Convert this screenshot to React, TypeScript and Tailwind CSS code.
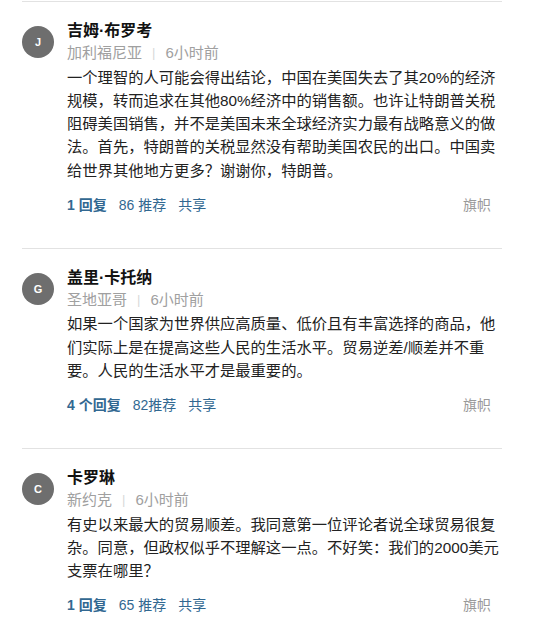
import React from "react";

type Comment = {
  id: string;
  initial: string;
  name: string;
  location: string;
  time: string;
  body: string;
  replies: string;
  recommends: string;
};

const comments: Comment[] = [
  {
    id: "1",
    initial: "J",
    name: "吉姆·布罗考",
    location: "加利福尼亚",
    time: "6小时前",
    body: "一个理智的人可能会得出结论，中国在美国失去了其20%的经济规模，转而追求在其他80%经济中的销售额。也许让特朗普关税阻碍美国销售，并不是美国未来全球经济实力最有战略意义的做法。首先，特朗普的关税显然没有帮助美国农民的出口。中国卖给世界其他地方更多？谢谢你，特朗普。",
    replies: "1 回复",
    recommends: "86 推荐",
  },
  {
    id: "2",
    initial: "G",
    name: "盖里·卡托纳",
    location: "圣地亚哥",
    time: "6小时前",
    body: "如果一个国家为世界供应高质量、低价且有丰富选择的商品，他们实际上是在提高这些人民的生活水平。贸易逆差/顺差并不重要。人民的生活水平才是最重要的。",
    replies: "4 个回复",
    recommends: "82推荐",
  },
  {
    id: "3",
    initial: "C",
    name: "卡罗琳",
    location: "新约克",
    time: "6小时前",
    body: "有史以来最大的贸易顺差。我同意第一位评论者说全球贸易很复杂。同意，但政权似乎不理解这一点。不好笑：我们的2000美元支票在哪里？",
    replies: "1 回复",
    recommends: "65 推荐",
  },
];

const CommentItem = ({ c }: { c: Comment }) => (
  <li className="border-t border-[#e2e2e2] pt-[18px] pb-[33px]">
    <div className="flex items-center">
      <div className="w-8 h-8 rounded-full bg-[#6e6e6e] flex items-center justify-center text-white text-[11px] font-bold">
        {c.initial}
      </div>
      <div className="ml-[13px]">
        <p className="text-[16px] leading-[22px] font-bold text-[#121212]">{c.name}</p>
        <p className="text-[15px] leading-[22px] text-[#a0a0a0] flex items-center">
          <span>{c.location}</span>
          <span className="mx-[10px] text-[#d8d8d8] text-[13px]">|</span>
          <span>{c.time}</span>
        </p>
      </div>
    </div>
    <div className="ml-[45px]">
      <p className="mt-[1.5px] text-[15.3px] leading-[23.25px] text-[#222]">{c.body}</p>
      <div className="mt-[13px] flex items-center text-[14px] leading-[20px] text-[#326891] pr-[11px]">
        <span className="font-bold">{c.replies}</span>
        <span className="ml-3">{c.recommends}</span>
        <span className="ml-3">共享</span>
        <span className="ml-auto text-[#999]">旗帜</span>
      </div>
    </div>
  </li>
);

const App = () => {
  return (
    <div
      className="bg-white min-h-screen pt-px pl-[22px]"
      style={{ fontFamily: '"Liberation Sans", "Noto Sans CJK SC", sans-serif' }}
    >
      <ul className="w-[480px]">
        {comments.map((c) => (
          <CommentItem key={c.id} c={c} />
        ))}
      </ul>
    </div>
  );
};

export default App;
